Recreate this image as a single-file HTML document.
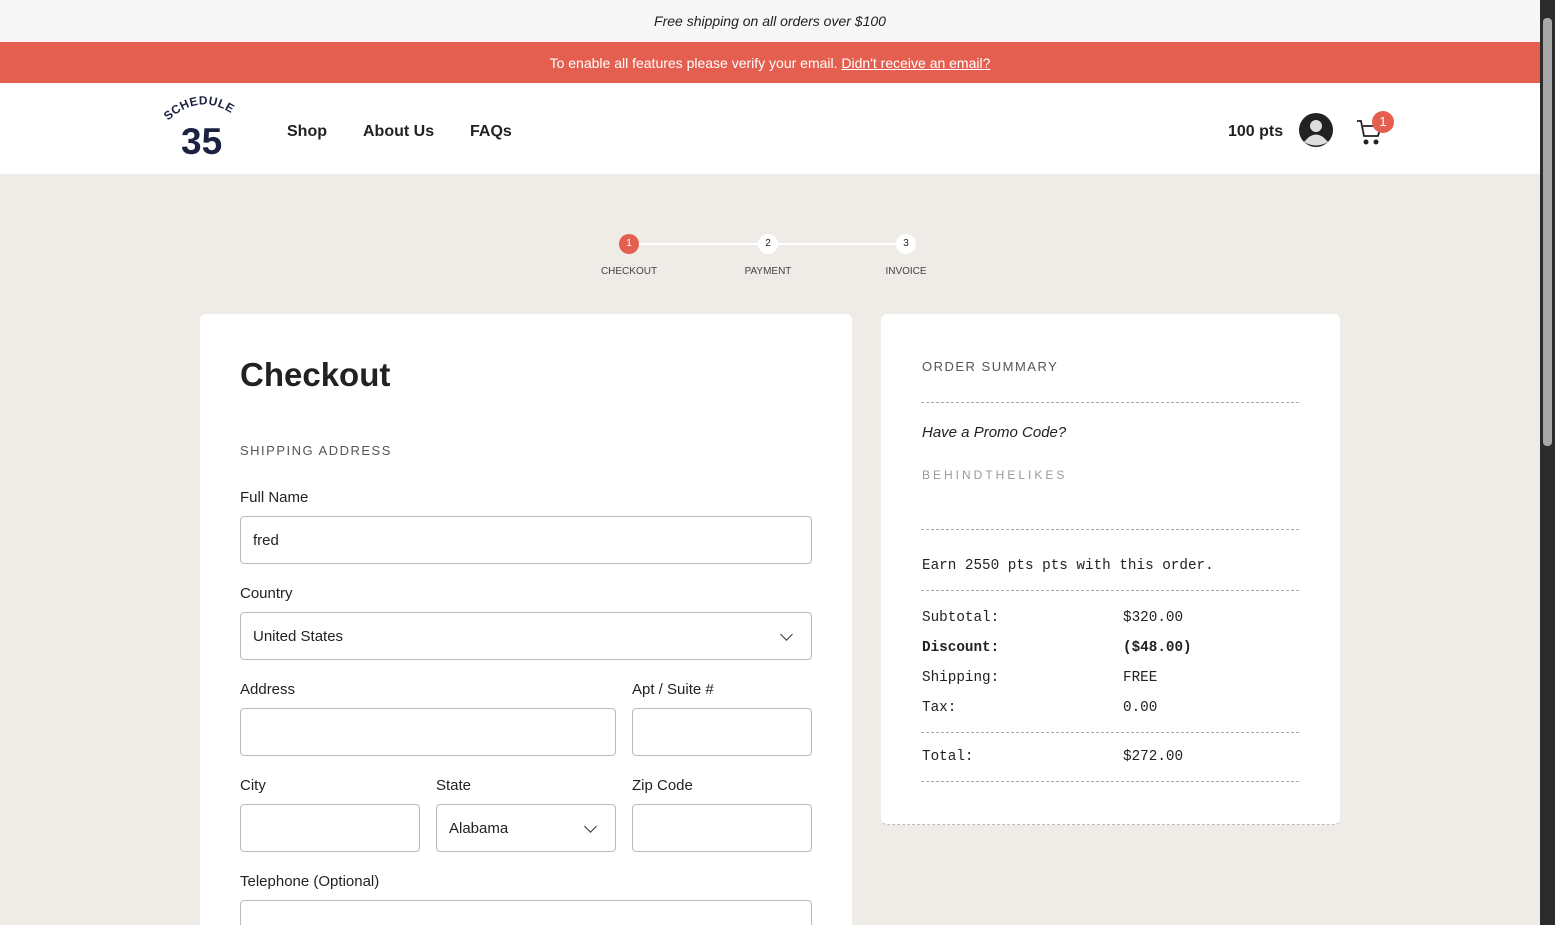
<!DOCTYPE html>
<html><head><meta charset="utf-8"><style>
*{box-sizing:border-box;margin:0;padding:0}
html{width:1555px;height:925px;overflow:hidden}
body{width:1555px;height:925px;overflow:hidden;background:#efebe6;font-family:"Liberation Sans",sans-serif;color:#222;position:relative}
.sb{position:absolute;right:0;top:0;width:15px;height:925px;background:#2b2b2b}
.sb .th{position:absolute;left:3px;top:18px;width:9px;height:428px;background:#a8a8a8;border-radius:4px}
.top{position:absolute;left:0;top:0;width:1540px;height:42px;background:#f7f7f7;text-align:center;line-height:42px;font-size:14px;font-style:italic}
.red{position:absolute;left:0;top:42px;width:1540px;height:41px;background:#e45f4f;color:#fff;text-align:center;line-height:42px;font-size:14px}
.hdr{position:absolute;left:0;top:83px;width:1540px;height:91px;background:#fff}
.nav{position:absolute;top:40px;font-size:16px;font-weight:bold;color:#222}
.card{position:absolute;background:#fff;border-radius:6px}
label{position:absolute;font-size:15px;color:#222}
.in{position:absolute;height:48px;border:1px solid #bbb;border-radius:4px;background:#fff;font-size:15px;padding-left:12px;line-height:48px}
.chev{position:absolute;right:20px;top:17px;width:9px;height:9px;border-right:1.5px solid #333;border-bottom:1.5px solid #333;transform:rotate(45deg)}
.dash{position:absolute;left:40px;width:378px;border-top:1px dashed #aaa}
.row{position:absolute;left:41px;font-size:14.3px;font-family:"Liberation Mono",monospace}
</style></head><body>
<div class="top">Free shipping on all orders over $100</div>
<div class="red">To enable all features please verify your email. <u>Didn't receive an email?</u></div>
<div class="hdr">
 <svg style="position:absolute;left:164px;top:10px" width="84" height="66" viewBox="0 0 84 66">
  <defs><path id="arc" d="M4 28 Q40 -6 80 30"/></defs>
  <text font-family="Liberation Sans" font-weight="bold" font-size="12" fill="#1b2140" letter-spacing="0.5"><textPath href="#arc">SCHEDULE</textPath></text>
  <text x="17" y="61" font-family="Liberation Sans" font-weight="bold" font-size="37" fill="#1b2140">35</text>
 </svg>
 <div class="nav" style="left:287px">Shop</div>
 <div class="nav" style="left:363px">About Us</div>
 <div class="nav" style="left:470px">FAQs</div>
 <div class="nav" style="left:1228px">100 pts</div>
 <svg style="position:absolute;left:1299px;top:30px" width="34" height="34" viewBox="0 0 34 34"><circle cx="17" cy="17" r="17" fill="#222"/><circle cx="17" cy="13" r="6" fill="#ddd"/><path d="M5 29 Q17 14 29 29 Q17 36 5 29Z" fill="#ddd"/></svg>
 <svg style="position:absolute;left:1356px;top:36px" width="28" height="28" viewBox="0 0 28 28" fill="none" stroke="#222" stroke-width="1.8"><path d="M1 2h4l3 15h14l3-10H7"/><circle cx="10" cy="23" r="1.6" fill="#222"/><circle cx="20" cy="23" r="1.6" fill="#222"/></svg>
 <div style="position:absolute;left:1372px;top:28px;width:22px;height:22px;border-radius:50%;background:#e45f4f;color:#fff;font-size:13px;text-align:center;line-height:22px">1</div>
</div>
<div style="position:absolute;left:629px;top:243px;width:278px;height:2px;background:#fff"></div>
<div style="position:absolute;left:619px;top:234px;width:20px;height:20px;border-radius:50%;background:#e45f4f;color:#fff;font-size:10px;text-align:center;line-height:20px">1</div>
<div style="position:absolute;left:758px;top:234px;width:20px;height:20px;border-radius:50%;background:#fff;font-size:10px;text-align:center;line-height:20px">2</div>
<div style="position:absolute;left:896px;top:234px;width:20px;height:20px;border-radius:50%;background:#fff;font-size:10px;text-align:center;line-height:20px">3</div>
<div style="position:absolute;left:589px;top:266px;width:80px;text-align:center;font-size:10px;color:#444">CHECKOUT</div>
<div style="position:absolute;left:728px;top:266px;width:80px;text-align:center;font-size:10px;color:#444">PAYMENT</div>
<div style="position:absolute;left:866px;top:266px;width:80px;text-align:center;font-size:10px;color:#444">INVOICE</div>

<div class="card" style="left:200px;top:314px;width:652px;height:620px">
 <div style="position:absolute;left:40px;top:42px;font-size:33px;font-weight:bold">Checkout</div>
 <div style="position:absolute;left:40px;top:129px;font-size:13px;letter-spacing:1.5px;color:#555">SHIPPING ADDRESS</div>
 <label style="left:40px;top:175px">Full Name</label>
 <div class="in" style="left:40px;top:202px;width:572px">fred</div>
 <label style="left:40px;top:271px">Country</label>
 <div class="in" style="left:40px;top:298px;width:572px">United States<span class="chev"></span></div>
 <label style="left:40px;top:367px">Address</label>
 <div class="in" style="left:40px;top:394px;width:376px"></div>
 <label style="left:432px;top:367px">Apt / Suite #</label>
 <div class="in" style="left:432px;top:394px;width:180px"></div>
 <label style="left:40px;top:463px">City</label>
 <div class="in" style="left:40px;top:490px;width:180px"></div>
 <label style="left:236px;top:463px">State</label>
 <div class="in" style="left:236px;top:490px;width:180px">Alabama<span class="chev"></span></div>
 <label style="left:432px;top:463px">Zip Code</label>
 <div class="in" style="left:432px;top:490px;width:180px"></div>
 <label style="left:40px;top:559px">Telephone (Optional)</label>
 <div class="in" style="left:40px;top:586px;width:572px"></div>
</div>

<div class="card" style="left:881px;top:314px;width:459px;height:511px;border-bottom:1px dashed #bbb">
 <div style="position:absolute;left:41px;top:45px;font-size:13px;letter-spacing:1.5px;color:#555">ORDER SUMMARY</div>
 <div class="dash" style="top:88px"></div>
 <div style="position:absolute;left:41px;top:110px;font-size:15px;font-style:italic">Have a Promo Code?</div>
 <div style="position:absolute;left:41px;top:154px;font-size:12px;letter-spacing:3px;color:#999">BEHINDTHELIKES</div>
 <div class="dash" style="top:215px"></div>
 <div class="row" style="top:244px">Earn 2550 pts pts with this order.</div>
 <div class="dash" style="top:276px"></div>
 <div class="row" style="top:296px">Subtotal:</div><div class="row" style="left:242px;top:296px">$320.00</div>
 <div class="row" style="top:326px;font-weight:bold">Discount:</div><div class="row" style="left:242px;top:326px;font-weight:bold">($48.00)</div>
 <div class="row" style="top:356px">Shipping:</div><div class="row" style="left:242px;top:356px">FREE</div>
 <div class="row" style="top:386px">Tax:</div><div class="row" style="left:242px;top:386px">0.00</div>
 <div class="dash" style="top:418px"></div>
 <div class="row" style="top:435px">Total:</div><div class="row" style="left:242px;top:435px">$272.00</div>
 <div class="dash" style="top:467px"></div>
</div>
<div class="sb"><div class="th"></div></div>
</body></html>
